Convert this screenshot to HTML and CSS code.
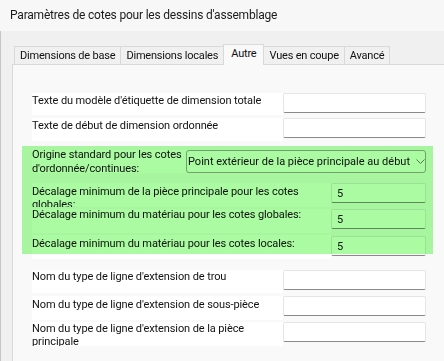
FILE: index.html
```html
<!DOCTYPE html>
<html lang="fr">
<head>
  <meta charset="UTF-8" />
  <title>Paramètres de cotes pour les dessins d'assemblage</title>
  <link rel="stylesheet" href="styles.css">
</head>
<body>
  <div class="titlebar">Paramètres de cotes pour les dessins d'assemblage</div>

  <div class="dialog">
    <!-- Tabs -->
    <div class="tabs">
      <div class="tab">Dimensions de base</div>
      <div class="tab">Dimensions locales</div>
      <div class="tab active">Autre</div>
      <div class="tab">Vues en coupe</div>
      <div class="tab">Avancé</div>
    </div>

    <div class="panel">
      <div class="form">
        <div class="row r1">
          <div class="label"><span class="text down1">Texte du modèle d'étiquette de dimension totale</span></div>
          <div class="field"></div>
        </div>
        <div class="row r2">
          <div class="label"><span class="text down1">Texte de début de dimension ordonnée</span></div>
          <div class="field"></div>
        </div>

        <!-- Highlighted group -->
        <div class="group">
          <div class="row r3">
            <div class="label narrow"><span class="text up2 loose">Origine standard pour les cotes<br>d'ordonnée/continues:</span></div>
            <div class="select">
              <span class="select-text">Point extérieur de la pièce principale au début</span>
              <svg class="chevron" width="9" height="6" viewBox="0 0 9 6"><polyline points="0.5,0.5 4.5,4.5 8.5,0.5" fill="none" stroke="#7a7a7a" stroke-width="1"/></svg>
            </div>
          </div>
          <div class="row r4">
            <div class="label wide"><span class="text down2">Décalage minimum de la pièce principale pour les cotes<br>globales:</span></div>
            <div class="field small">5</div>
          </div>
          <div class="row r5">
            <div class="label wide"><span class="text up1">Décalage minimum du matériau pour les cotes globales:</span></div>
            <div class="field small">5</div>
          </div>
          <div class="row r6">
            <div class="label wide"><span class="text down2">Décalage minimum du matériau pour les cotes locales:</span></div>
            <div class="field small">5</div>
          </div>
        </div>

        <div class="row r7">
          <div class="label"><span class="text">Nom du type de ligne d'extension de trou</span></div>
          <div class="field"></div>
        </div>
        <div class="row r8">
          <div class="label"><span class="text down2">Nom du type de ligne d'extension de sous-pièce</span></div>
          <div class="field"></div>
        </div>
        <div class="row r9">
          <div class="label"><span class="text">Nom du type de ligne d'extension de la pièce<br>principale</span></div>
          <div class="field"></div>
        </div>
      </div>
    </div>
  </div>
</body>
</html>
```
FILE: styles.css
```css
body {
  margin: 0;
  width: 444px;
  height: 361px;
  overflow: hidden;
  background: #f0f0f0;
  font-family: Roboto, "Noto Sans", sans-serif;
  font-size: 11px;
  color: #111;
}

.titlebar {
  height: 31px;
  line-height: 30px;
  padding-left: 10px;
  font-size: 12px;
  letter-spacing: -0.2px;
  background: #f7f7f7;
  color: #1b1b1b;
}

.dialog {
  height: 330px;
  padding-top: 13px;
  padding-left: 11px;
  border-left: 1px solid #c6c6c6;
  box-sizing: border-box;
  display: flex;
  flex-direction: column;
}

/* Tabs */
.tabs {
  display: flex;
  align-items: flex-end;
  padding-left: 2px;
}

.tab {
  border: 1px solid #d9d9d9;
  border-bottom: none;
  padding: 1px 5px 0;
  line-height: 16px;
  background: #f0f0f0;
  white-space: nowrap;
  letter-spacing: -0.2px;
}

.tab + .tab {
  margin-left: -1px;
}

.tab.active {
  position: relative;
  z-index: 1;
  padding: 1px 7px 3px;
  margin-bottom: -1px;
  background: #f9f9f9;
}

/* Panel */
.panel {
  flex: 1;
  background: #f9f9f9;
  border-top: 1px solid #d9d9d9;
  border-left: 1px solid #d9d9d9;
}

.form {
  padding: 28px 0 0 19px;
  letter-spacing: -0.1px;
}

.row {
  display: flex;
  align-items: flex-start;
}

.label {
  width: 251px;
  height: 23px;
  background: #fff;
  overflow: hidden;
  white-space: nowrap;
}

.label.narrow { width: 155px; overflow: visible; }
.label.wide { width: 299px; height: 24px; }

.text {
  display: block;
  line-height: 13px;
}

.text.loose { line-height: 14px; }
.text.up1 { margin-top: -1px; }
.text.up2 { margin-top: -2px; }
.text.down1 { margin-top: 1px; }
.text.down2 { margin-top: 2px; }

.field {
  width: 143px;
  height: 20px;
  box-sizing: border-box;
  background: #fff;
  border: 1px solid #e6e6e6;
  border-bottom-color: #8a8a8a;
  border-radius: 2px;
  padding-left: 5px;
  line-height: 19px;
}

.field.small { width: 95px; }

.r1 { margin-bottom: 3px; }
.r1 .label { height: 22px; }
.r2 { margin-bottom: 9px; }
.r3 { margin-bottom: 10px; }
.r4, .r5 { margin-bottom: 2px; }
.r6 .field { margin-top: 1px; }
.r7 { margin-top: 11px; margin-bottom: 3px; }
.r8 { margin-bottom: 2px; }
.r8 .label, .r9 .label { height: 24px; }

/* Dropdown */
.select {
  width: 240px;
  height: 23px;
  box-sizing: border-box;
  border: 1px solid #a6a6a6;
  border-radius: 3px;
  background: #fff;
  display: flex;
  align-items: center;
  padding: 0 0 0 1px;
  letter-spacing: 0;
}

.select-text {
  width: 223px;
  overflow: hidden;
  white-space: nowrap;
  line-height: 21px;
}

.chevron {
  margin-left: 6px;
}

/* Highlight overlay */
.group {
  position: relative;
  width: 394px;
}

.group::after {
  content: "";
  position: absolute;
  left: -10px;
  right: -7px;
  top: -4px;
  bottom: 5px;
  background: #abfba3;
  mix-blend-mode: multiply;
  pointer-events: none;
}
```
